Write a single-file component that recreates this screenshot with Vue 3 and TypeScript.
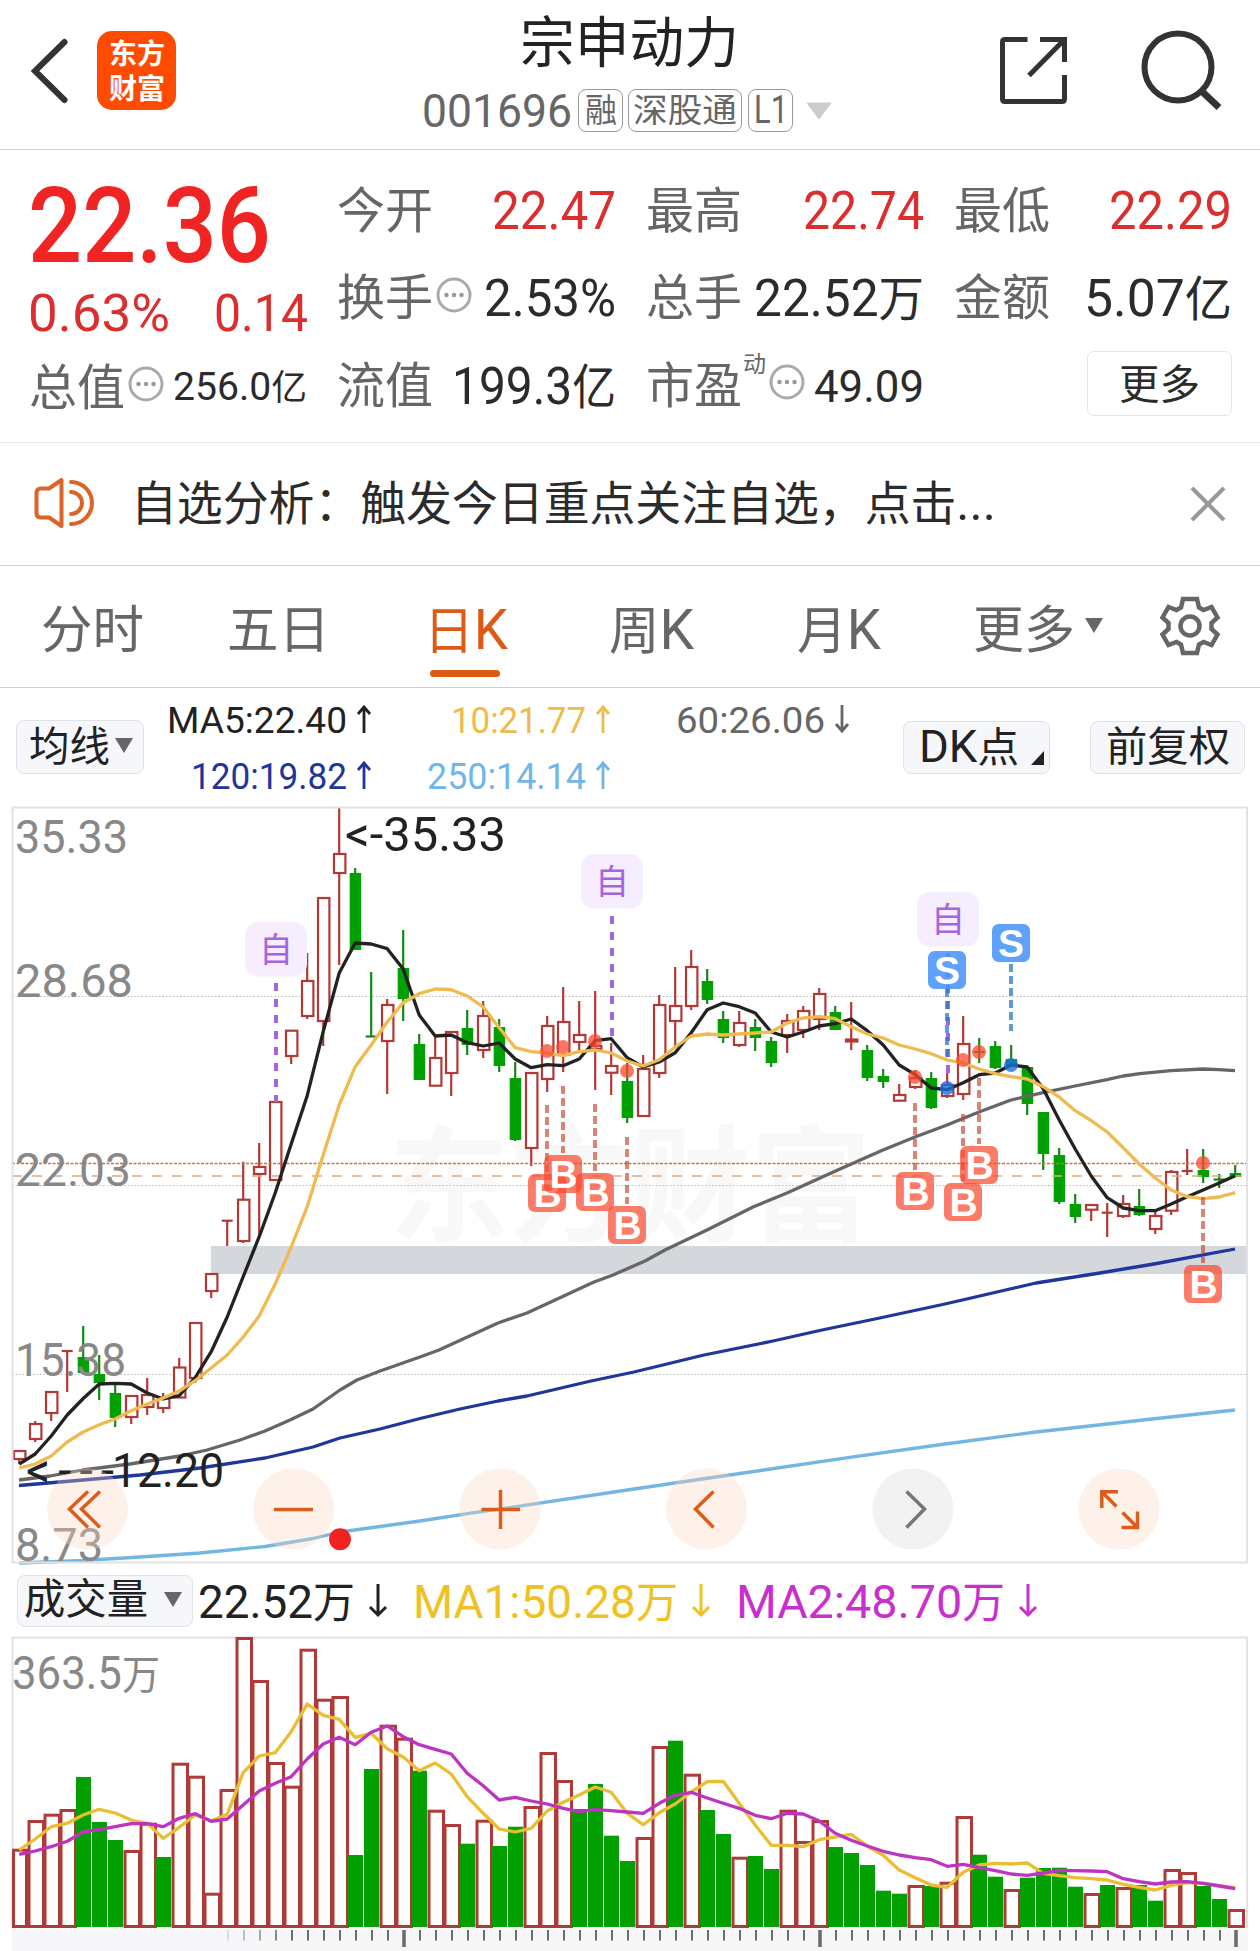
<script setup lang="ts">
import { h } from 'vue'

interface FitProps {
  t: string
  w: number
  s: number
}

// One line of text set to an exact advance width; the box bottom is the baseline.
// Han characters are set a little smaller than the Latin ones beside them.
const Fit = (p: FitProps) => {
  const runs = p.t.match(/[\u3000-\u9fff\uff00-\uffef]+|[^\u3000-\u9fff\uff00-\uffef]+/g) ?? []
  const height = p.s * 0.72
  const han = runs.length === 1 && p.t.charCodeAt(0) >= 0x3000
  return h('svg', { width: p.w, height, style: 'display:block;overflow:visible;flex:none' }, [
    h(
      'text',
      {
        x: 0, y: han ? height - p.s * 0.022 : height, 'font-size': p.s,
        textLength: p.w, lengthAdjust: 'spacingAndGlyphs', fill: 'currentColor',
      },
      runs.map((r) => h('tspan', { 'font-size': r.charCodeAt(0) >= 0x3000 ? p.s * 0.915 : p.s }, r)),
    ),
  ])
}
Fit.props = ['t', 'w', 's']

type Candle = [number, number, number, number, 'r' | 'g']
// high, body top, body bottom, low, direction
const candles: Candle[] = [
  [1451, 1451, 1459, 1464, 'r'], [1421, 1424, 1439, 1442, 'r'], [1391, 1392, 1413, 1421, 'r'], [1351, 1351, 1351, 1392, 'r'],
  [1326, 1357, 1373, 1373, 'g'], [1355, 1374, 1383, 1400, 'g'], [1385, 1393, 1418, 1427, 'g'], [1396, 1396, 1417, 1424, 'r'],
  [1378, 1395, 1407, 1415, 'r'], [1393, 1398, 1408, 1413, 'r'], [1358, 1367.5, 1397.5, 1397.5, 'r'], [1323, 1323, 1378, 1383, 'r'],
  [1274, 1274, 1291, 1298, 'r'], [1220.7, 1220.7, 1220.7, 1246, 'r'], [1161.7, 1199.7, 1241, 1243, 'r'], [1143, 1167, 1174, 1235, 'r'],
  [1102, 1102, 1180, 1180, 'r'], [1030.7, 1030.7, 1056, 1064, 'r'], [953, 981, 1016, 1019, 'r'], [898, 898, 1021, 1046, 'r'],
  [807, 854, 873, 965, 'r'], [868, 873, 950, 950, 'g'], [972, 1036.5, 1036.5, 1037, 'g'], [999, 1005, 1041, 1094, 'r'],
  [930, 968, 999, 1021, 'g'], [1034, 1044, 1080, 1080, 'g'], [1037, 1058, 1085.7, 1085.7, 'r'], [1032, 1032, 1073, 1096, 'r'],
  [1010, 1028, 1045, 1055, 'g'], [1001, 1016, 1050, 1058, 'r'], [1019, 1027, 1066, 1072, 'g'], [1062, 1078, 1140, 1141, 'g'],
  [1073, 1073, 1148, 1166, 'r'], [1016, 1026, 1079, 1092, 'r'], [987, 1022, 1055, 1072, 'r'], [1001, 1035, 1042, 1050, 'r'],
  [991, 1046, 1049, 1090, 'r'], [1043, 1066, 1072.7, 1095, 'r'], [1063, 1081, 1118, 1123, 'g'], [1055, 1069, 1116, 1117, 'r'],
  [995, 1005, 1073, 1078, 'r'], [967, 1006, 1021, 1048, 'r'], [950, 967, 1006, 1010, 'r'], [969, 981, 1000, 1004, 'g'],
  [1011, 1019, 1038, 1043, 'g'], [1011, 1023, 1045, 1047, 'r'], [1019, 1027, 1038, 1051, 'g'], [1037, 1041, 1063, 1067, 'g'],
  [1014, 1021, 1035, 1053, 'r'], [1006, 1011, 1030, 1038, 'r'], [988, 994, 1019, 1030, 'r'], [1006, 1012, 1030, 1030, 'g'],
  [1002, 1039.5, 1041.5, 1050, 'r'], [1045, 1050, 1078, 1081, 'g'], [1069, 1076, 1082, 1088, 'g'], [1084, 1095, 1100.7, 1100.7, 'r'],
  [1070, 1078, 1087, 1089, 'r'], [1072, 1078, 1108, 1109, 'g'], [1073, 1085, 1096, 1098, 'r'], [1016, 1044, 1094, 1100, 'r'],
  [1038, 1052, 1052, 1063, 'g'], [1041, 1046, 1068, 1069, 'g'], [1045, 1059, 1067, 1067, 'g'], [1067, 1067, 1104, 1115, 'g'],
  [1112, 1112, 1154, 1170, 'g'], [1148, 1155, 1202, 1204, 'g'], [1194, 1204, 1217, 1223, 'g'], [1205, 1205, 1209.7, 1221, 'r'],
  [1203, 1212.7, 1212.7, 1237, 'r'], [1195, 1204, 1216, 1218, 'r'], [1189, 1206, 1215, 1216, 'g'], [1210, 1216, 1229, 1234, 'r'],
  [1170, 1172, 1210.7, 1215, 'r'], [1149, 1171, 1171, 1175, 'r'], [1149, 1170, 1177, 1183, 'g'], [1174, 1179.5, 1179.5, 1188, 'g'],
  [1165, 1173, 1177, 1177, 'g'],
]

const cx = (i: number) => 19.2 + i * 16
const line = (ys: number[], f: (y: number) => number = (y) => y) => ys.map((y, i) => `${cx(i)},${f(y).toFixed(1)}`).join(' ')

const ma5 = line([
  1464, 1454, 1436, 1415, 1398.5, 1384, 1383.3, 1384, 1393, 1399, 1395.7, 1377.7, 1351.7, 1317, 1276.7, 1236.7, 1193, 1144, 1095.7,
  1031.7, 973, 943, 944, 948.7, 969, 1015, 1036, 1035, 1042.7, 1046, 1043, 1059, 1067.7, 1064.7, 1065.7, 1059, 1040.7, 1038.7, 1057.7,
  1067, 1062, 1052.7, 1032.7, 1009.7, 1003, 1006.7, 1013, 1032, 1037, 1032, 1026, 1023.7, 1019, 1030.7, 1045, 1065, 1074.7, 1088,
  1089.7, 1082.7, 1074.7, 1073, 1065, 1067, 1088.7, 1120, 1149, 1176, 1197.7, 1208, 1210.7, 1210.7, 1204, 1196.7, 1190, 1183, 1175.7,
])
const ma10 = line([
  1468, 1464, 1456, 1442, 1432, 1424.7, 1419, 1410.7, 1404, 1398, 1391, 1380.7, 1368, 1355, 1337, 1316, 1284, 1247, 1206.7, 1155, 1105,
  1066.7, 1045, 1022, 1002.7, 993.7, 989, 989.7, 996, 1007, 1027.7, 1047.7, 1051.7, 1053, 1055.7, 1051.7, 1050, 1053, 1061, 1066,
  1059.7, 1047, 1036, 1034, 1035, 1034, 1033, 1032, 1023, 1018, 1016.7, 1018.7, 1026.7, 1034, 1038, 1045, 1049, 1053.7, 1060, 1063,
  1069, 1073.7, 1076.7, 1079, 1086.7, 1097, 1110.7, 1120.7, 1132, 1147.7, 1164, 1178, 1190, 1196.7, 1198.7, 1197, 1192.7,
])
const ma60 =
  '19,1480 50,1476 83,1470 130,1464 180,1456 207,1450 240,1440 265,1431 290,1420 313,1409 340,1390 357,1380 380,1371 420,1357 439,1350 498,1323 527,1313 594,1282 613,1275 645,1261 665,1250 707,1230 753,1207 787,1193 840,1169 883,1150 915,1137 947,1125 979,1112 1011,1100 1043,1092.7 1075,1086 1107,1079.7 1123,1076 1140,1073.7 1171,1070.7 1203,1069 1219,1069.7 1235,1070.7'
const ma120 =
  '19,1485.5 83,1480 140,1475 200,1468 265,1458 313,1447 340,1438 380,1429 420,1418.5 460,1409 498,1401 527,1396 591,1381 634,1372 704,1355 773,1341 822,1330 875,1319 945,1304 1036,1283 1100,1273 1154,1264 1235,1249'
const ma250 =
  '19,1563 83,1560.5 140,1557 200,1553 265,1546.5 313,1538.5 340,1532 380,1526.5 420,1521 474,1512.7 516,1506.7 634,1489 709,1478 848,1457.7 945,1444 1036,1432 1143,1420 1235,1410'

const volTops = [
  1848.7, 1820, 1813.7, 1809, 1777, 1822, 1840, 1850, 1822.7, 1857, 1762.7, 1775.7, 1892.7, 1789, 1637, 1680, 1762, 1785.7, 1648.7,
  1698.7, 1696, 1855, 1769, 1724.7, 1737.7, 1770.7, 1809.7, 1824, 1843.7, 1819.7, 1846, 1826.7, 1806, 1752, 1780, 1809, 1784, 1835.7,
  1861, 1837, 1746, 1740.7, 1773.7, 1810, 1834, 1856.7, 1856, 1869, 1809.7, 1841, 1820, 1847, 1853, 1865, 1890.7, 1893.7, 1885, 1886,
  1881.7, 1816, 1854.7, 1876.7, 1889, 1877.7, 1868, 1867.7, 1886.7, 1893, 1885, 1887, 1885, 1900.7, 1869, 1872, 1886, 1899, 1909,
]
const volGreen = new Set([
  4, 5, 6, 9, 21, 22, 25, 28, 30, 31, 35, 36, 37, 38, 41, 43, 44, 46, 47, 51, 52, 53, 54, 55, 57, 60, 61, 63, 64, 65, 66, 68, 70, 71,
  74, 75,
])
const toVol = (y: number) => 1620 + y / 3
const vma1 = line(
  [
    690, 657, 620, 610, 585, 568, 579, 600, 610, 655, 622, 585, 603, 583, 458, 408, 398, 335, 252, 286, 298, 352, 340, 386, 411, 452,
    429, 462, 530, 580, 627, 636, 625, 573, 547, 525, 501, 517, 580, 614, 578, 552, 516, 485, 484, 550, 615, 676, 676, 680, 659, 651,
    643, 678, 706, 750, 773, 795, 802, 757, 735, 730, 732, 729, 760, 767, 773, 776, 780, 793, 802, 810, 796, 788, 790, 797, 803,
  ],
  toVol,
)
const vma2 = line(
  [
    703, 693, 680, 664, 636, 629, 620, 611, 611, 620, 595, 581, 604, 597, 555, 513, 490, 470, 417, 372, 352, 374, 337, 318, 350, 374,
    388, 402, 460, 497, 540, 532, 543, 552, 565, 575, 569, 572, 576, 580, 550, 526, 517, 534, 550, 565, 586, 596, 580, 582, 603, 640,
    661, 678, 694, 705, 713, 719, 739, 733, 743, 752, 762, 766, 759, 751, 752, 753, 755, 776, 785, 792, 786, 785, 790, 798, 806,
  ],
  toVol,
)

const ticks = Array.from({ length: 64 }, (_, k) => ({
  x: 228 + k * 16,
  major: k === 11 || k === 37 || k === 63,
  o: Math.min(1, 0.2 + k * 0.2),
}))

const axis: [string, number, number][] = [
  ['35.33', 852.5, 113], ['28.68', 997, 118], ['22.03', 1186, 116], ['15.38', 1375.5, 111], ['8.73', 1561, 88],
]
// x, line start, badge top, marker dot y
const buys = [
  [547, 1105, 1174, 1051], [563, 1086, 1155, 1047], [595, 1104, 1173, 1041], [627, 1137, 1206, 1071],
  [915, 1103, 1172, 1077], [963, 1114, 1183, 1060], [979, 1078, 1146, 1052], [1203, 1197, 1265, 1163],
]
const sells = [[947, 989, 1059, 951, 1088], [1011, 964, 1031, 924, 1065]]
const picks = [[276, 922, 983, 1102], [612, 854, 916, 1036], [948, 892, 953, 1073]]
</script>

<template>
  <main class="app">
    <header class="top">
      <svg class="back" width="40" height="68" viewBox="30 37 40 68">
        <path d="M65.5 42 36 71 65.5 100" fill="none" stroke="#333" stroke-width="6" stroke-linecap="round" transform="translate(-1 0)" />
      </svg>
      <div class="logo"><Fit t="东方" :w="56" :s="31" /><Fit t="财富" :w="56" :s="31" /></div>
      <div class="heading">
        <Fit class="name" t="宗申动力" :w="219" :s="60" />
        <div class="codes">
          <Fit t="001696" :w="150" :s="46" />
          <span class="tag"><Fit t="融" :w="32" :s="36" /></span>
          <span class="tag wide"><Fit t="深股通" :w="104" :s="36" /></span>
          <span class="tag"><Fit t="L1" :w="34" :s="38" /></span>
          <svg class="caret" width="26" height="18" viewBox="0 0 26 18"><path d="M1 1h24L13 17z" fill="#ccc" stroke="#ccc" stroke-linejoin="round" /></svg>
        </div>
      </div>
      <svg class="share" width="68" height="68" viewBox="999 37 68 68" fill="none" stroke="#333" stroke-width="5">
        <path d="M1026.5 39.5H1004q-2.500 0-2.500 2.500V99q0 2.500 2.500 2.500h57q2.500 0 2.500-2.500V75M1039 39.500h24.500V62M1063 40l-35 35.500" />
      </svg>
      <svg class="search" width="82" height="82" viewBox="1140 30 82 82" fill="none" stroke="#333" stroke-width="6">
        <circle cx="1177" cy="67" r="33.500" /><path d="M1201 91.500 1218 107.500" stroke-width="7" />
      </svg>
    </header>

    <section class="quote">
      <div class="left">
        <Fit class="price" t="22.36" :w="243" :s="105" />
        <div class="line change"><Fit t="0.63%" :w="142" :s="52" /><Fit t="0.14" :w="94" :s="52" /></div>
        <div class="line total">
          <div class="lab"><Fit t="总值" :w="96" :s="53" />
            <svg class="dots" width="36" height="36" viewBox="0 0 36 36"><circle cx="18" cy="18" r="16" fill="none" stroke="#aaa" stroke-width="3" /><path d="M10.500 18h.01M18 18h.01M25.500 18h.01" stroke="#999" stroke-width="4.500" stroke-linecap="round" /></svg>
          </div>
          <Fit class="up5" t="256.0亿" :w="134" :s="38" />
        </div>
      </div>
      <div class="grid">
        <div class="cell"><Fit class="g" t="今开" :w="96" :s="53" /><Fit class="red" t="22.47" :w="124" :s="53" /></div>
        <div class="cell"><Fit class="g" t="最高" :w="96" :s="53" /><Fit class="red" t="22.74" :w="121" :s="53" /></div>
        <div class="cell"><Fit class="g" t="最低" :w="96" :s="53" /><Fit class="red" t="22.29" :w="123" :s="53" /></div>
        <div class="cell">
          <div class="lab"><Fit class="g" t="换手" :w="96" :s="53" />
            <svg class="dots" width="36" height="36" viewBox="0 0 36 36"><circle cx="18" cy="18" r="16" fill="none" stroke="#aaa" stroke-width="3" /><path d="M10.500 18h.01M18 18h.01M25.500 18h.01" stroke="#999" stroke-width="4.500" stroke-linecap="round" /></svg>
          </div>
          <Fit t="2.53%" :w="132" :s="52" />
        </div>
        <div class="cell"><Fit class="g" t="总手" :w="96" :s="53" /><Fit t="22.52万" :w="170" :s="52" /></div>
        <div class="cell"><Fit class="g" t="金额" :w="96" :s="53" /><Fit t="5.07亿" :w="148" :s="52" /></div>
        <div class="cell"><Fit class="g" t="流值" :w="96" :s="53" /><Fit t="199.3亿" :w="164" :s="52" /></div>
        <div class="cell">
          <div class="lab"><Fit class="g" t="市盈" :w="96" :s="53" /><span class="sup">动</span>
            <svg class="dots" width="36" height="36" viewBox="0 0 36 36"><circle cx="18" cy="18" r="16" fill="none" stroke="#aaa" stroke-width="3" /><path d="M10.500 18h.01M18 18h.01M25.500 18h.01" stroke="#999" stroke-width="4.500" stroke-linecap="round" /></svg>
          </div>
          <Fit class="up3" t="49.09" :w="110" :s="44" />
        </div>
        <div class="cell end"><button class="more"><Fit t="更多" :w="81" :s="45" /></button></div>
      </div>
    </section>

    <section class="notice">
      <svg width="62" height="54" viewBox="33 476 62 54" fill="none" stroke="#dc6428" stroke-width="4" stroke-linecap="round" stroke-linejoin="round">
        <path d="M61.500 480v46L49 517.500H41q-4.500 0-4.500-4.500V493q0-4.500 4.500-4.500h8z" />
        <path d="M71 492a11 11 0 0 1 0 22M71 482a21 21 0 0 1 0 42" />
      </svg>
      <Fit class="msg" t="自选分析：触发今日重点关注自选，点击..." :w="865" :s="50.500" />
      <svg class="close" width="36" height="36" viewBox="0 0 36 36"><path d="M2 2 34 34M34 2 2 34" stroke="#999" stroke-width="4.200" /></svg>
    </section>

    <nav class="tabs">
      <Fit class="t1" t="分时" :w="103" :s="56" />
      <Fit class="t2" t="五日" :w="103" :s="56" />
      <span class="t3 on"><Fit t="日K" :w="84" :s="56" /></span>
      <Fit class="t4" t="周K" :w="85" :s="56" />
      <Fit class="t5" t="月K" :w="84" :s="56" />
      <Fit class="t6" t="更多" :w="102" :s="56" />
      <svg class="tri" width="18" height="15" viewBox="0 0 18 15"><path d="M0 0h18L9 15z" fill="#666" /></svg>
      <svg class="gear" width="62" height="62" viewBox="-31 -31 62 62" fill="none" stroke="#666" stroke-width="4.500" stroke-linejoin="miter">
        <path d="M-7-27H7L9-18.500 13.500-16 21.500-19 27.500-8.500 21.500-3V3L27.500 8.500 21.500 19 13.500 16 9 18.500 7 27H-7L-9 18.500-13.500 16-21.500 19-27.500 8.500-21.500 3V-3L-27.500-8.500-21.500-19-13.500-16-9-18.500z" />
        <circle r="9.500" />
      </svg>
    </nav>

    <section class="mabar">
      <div class="chip c1"><Fit t="均线" :w="81" :s="45" /><svg width="18" height="15" viewBox="0 0 18 15"><path d="M0 0h18L9 15z" fill="#666" /></svg></div>
      <div class="legend">
        <span style="color: #222"><Fit t="MA5:22.40" :w="180" :s="37.500" /><svg width="16" height="28" viewBox="0 0 16 28"><path d="M8 28V2M2 9 8 2l6 7" /></svg></span>
        <span style="color: #efba4f"><Fit t="10:21.77" :w="135" :s="37.500" /><svg width="16" height="28" viewBox="0 0 16 28"><path d="M8 28V2M2 9 8 2l6 7" /></svg></span>
        <span style="color: #666"><Fit t="60:26.06" :w="149" :s="37.500" /><svg width="16" height="28" viewBox="0 0 16 28"><path d="M8 0v26M2 19l6 7 6-7" /></svg></span>
        <span style="color: #21369a"><Fit t="120:19.82" :w="156" :s="37.500" /><svg width="16" height="28" viewBox="0 0 16 28"><path d="M8 28V2M2 9 8 2l6 7" /></svg></span>
        <span style="color: #70b7e8"><Fit t="250:14.14" :w="159" :s="37.500" /><svg width="16" height="28" viewBox="0 0 16 28"><path d="M8 28V2M2 9 8 2l6 7" /></svg></span>
      </div>
      <div class="chip c2"><Fit t="DK点" :w="100" :s="45" /><svg class="corner" width="13" height="14" viewBox="0 0 13 14"><path d="M13 0v14H0z" fill="#222" /></svg></div>
      <div class="chip c3"><Fit t="前复权" :w="124" :s="45" /></div>
    </section>

    <svg class="chart" width="1260" height="757" viewBox="0 807 1260 757">
      <text class="mark" x="389" y="1232" font-size="126" textLength="482" lengthAdjust="spacingAndGlyphs">东方财富</text>
      <g stroke="#bbb" stroke-dasharray="1.500 2"><path d="M12 996.500H1247M12 1185.500H1247M12 1374.500H1247" /></g>
      <rect x="211" y="1246" width="1036" height="28" fill="#d4d7dc" />
      <g stroke-width="2.200">
        <template v-for="(c, i) in candles" :key="i">
          <path :d="`M${cx(i)} ${c[0]}V${c[1]}M${cx(i)} ${c[2]}V${c[3]}`" :stroke="c[4] === 'r' ? '#b13a38' : '#128a14'" />
          <path v-if="c[2] - c[1] < 1" :d="`M${cx(i) - 5.500} ${c[1]}h11`" :stroke="c[4] === 'r' ? '#b13a38' : '#128a14'" />
          <rect v-else-if="c[4] === 'r'" :x="cx(i) - 5.200" :y="c[1]" width="11.400" :height="c[2] - c[1]" fill="#fff" stroke="#b13a38" />
          <rect v-else :x="cx(i) - 5.500" :y="c[1]" width="11.500" :height="c[2] - c[1]" fill="#02a002" />
        </template>
      </g>
      <path d="M12 1163.500H1247" stroke="#c7733f" stroke-width="1.400" stroke-dasharray="3 1.500" />
      <path d="M12 1176H1247" stroke="#dda980" stroke-width="1.500" stroke-dasharray="10 10" />
      <g fill="none" stroke-width="3.300" stroke-linejoin="round">
        <polyline :points="ma250" stroke="#74b6e2" />
        <polyline :points="ma120" stroke="#21369a" />
        <polyline :points="ma60" stroke="#666" />
        <polyline :points="ma5" stroke="#222" />
        <polyline :points="ma10" stroke="#efba4f" />
      </g>
      <path d="M12.500 807.500H1247V1562.500H12.500z" fill="none" stroke="#e2e2e2" stroke-width="2" />

      <g v-for="p in picks" :key="p[0]">
        <rect :x="p[0] - 31" :y="p[1]" width="62" height="54.500" rx="13" fill="#f6edfe" />
        <text :x="p[0]" :y="p[1] + 40" text-anchor="middle" font-size="34" fill="#a566dc">自</text>
        <path :d="`M${p[0]} ${p[2]}V${p[3]}`" stroke="#a566dc" stroke-width="4" stroke-dasharray="8 8" />
      </g>
      <g v-for="b in buys" :key="'b' + b[0]">
        <circle :cx="b[0]" :cy="b[3]" r="7" fill="#f9492f" fill-opacity=".75" />
        <path :d="`M${b[0]} ${b[1]}V${b[2] - 2}`" stroke="#c94a38" stroke-opacity=".68" stroke-width="4" stroke-dasharray="8 4" />
        <rect :x="b[0] - 19" :y="b[2]" width="38" height="38" rx="6.500" fill="#f9492f" fill-opacity=".72" />
        <text class="letter" :x="b[0] + 0.500" :y="b[2] + 33" font-size="39">B</text>
      </g>
      <g v-for="s in sells" :key="'s' + s[0]">
        <circle :cx="s[0]" :cy="s[4]" r="7" fill="#1a6fe0" fill-opacity=".8" />
        <path :d="`M${s[0]} ${s[1]}V${s[2]}`" stroke="#2f78c8" stroke-opacity=".75" stroke-width="4" stroke-dasharray="8 4" />
        <rect :x="s[0] - 19" :y="s[3]" width="38" height="38" rx="6.500" fill="#4a94fa" fill-opacity=".88" />
        <text class="letter" :x="s[0]" :y="s[3] + 33" font-size="39">S</text>
      </g>

      <g fill="#888" font-size="47">
        <text v-for="a in axis" :key="a[0]" x="15" :y="a[1]" :textLength="a[2]" lengthAdjust="spacingAndGlyphs">{{ a[0] }}</text>
      </g>
      <g fill="#222" font-size="48">
        <text x="345" y="851" textLength="161" lengthAdjust="spacingAndGlyphs">&lt;-35.33</text>
        <text x="26" y="1487" textLength="88" lengthAdjust="spacing">&lt;---</text>
        <text x="112" y="1487" textLength="112" lengthAdjust="spacingAndGlyphs">12.20</text>
      </g>

      <g fill="#fbd3bf" fill-opacity=".33">
        <circle v-for="x in [87.500, 293.500, 500, 706.500, 1119]" :key="x" :cx="x" cy="1509" r="40.500" />
        <circle cx="913" cy="1509" r="40.500" fill="#d8d8d8" />
      </g>
      <g fill="none" stroke="#d95d1c" stroke-width="3.500">
        <path d="M88 1491.500 69.500 1509 88 1527.500M100 1491.500 81.500 1509 100 1527.500M274 1509.500h39M481.500 1509.500H520M500.500 1490v39M713.500 1491.500 695.500 1509l18 18.500" />
        <path d="M906.500 1491.500 924.500 1509l-18 18.500" stroke="#777" />
        <path d="M1118 1491.800H1101.800V1508M1102 1492l14.500 14.500M1121.500 1527.500H1137.500V1511.500M1137 1527l-14.500-14.500" />
      </g>
      <circle cx="340" cy="1539.300" r="11" fill="#f12222" />
    </svg>

    <section class="volhead">
      <div class="chip c4"><Fit t="成交量" :w="124" :s="46" /><svg width="18" height="15" viewBox="0 0 18 15"><path d="M0 0h18L9 15z" fill="#666" /></svg></div>
      <Fit class="v1" t="22.52万" :w="157" :s="47" />
      <svg class="a1" width="20" height="34" viewBox="0 0 20 34"><path d="M10 0v31M2 23l8 8 8-8" stroke="#222" /></svg>
      <Fit class="v2" t="MA1:50.28万" :w="265" :s="47" />
      <svg class="a2" width="20" height="34" viewBox="0 0 20 34"><path d="M10 0v31M2 23l8 8 8-8" stroke="#efc223" /></svg>
      <Fit class="v3" t="MA2:48.70万" :w="269" :s="47" />
      <svg class="a3" width="20" height="34" viewBox="0 0 20 34"><path d="M10 0v31M2 23l8 8 8-8" stroke="#c92fcf" /></svg>
    </section>

    <svg class="chart" width="1260" height="314" viewBox="0 1637 1260 314">
      <rect x="12" y="1928.500" width="1236" height="23" fill="#f7f7fa" />
      <path d="M12.500 1928V1637.500H1247V1928" fill="none" stroke="#e2e2e2" stroke-width="2" />
      <g fill="#888">
        <text x="12" y="1689" textLength="148" lengthAdjust="spacingAndGlyphs"><tspan font-size="46">363.5</tspan><tspan font-size="40">万</tspan></text>
      </g>
      <template v-for="(y, i) in volTops" :key="i">
        <rect v-if="volGreen.has(i)" :x="cx(i) - 7.200" :y="y" width="15" :height="1927 - y" fill="#02a002" />
        <rect v-else :x="Math.max(cx(i) - 6.200, 13.500)" :y="y + 1.500" :width="i ? 14.500 : 13" :height="1925 - y" fill="#fff" stroke="#b13a38" stroke-width="3" />
      </template>
      <g fill="none" stroke-width="3.300" stroke-linejoin="round">
        <polyline :points="vma1" stroke="#e9be33" />
        <polyline :points="vma2" stroke="#bf33c1" />
      </g>
      <path
        v-for="t in ticks" :key="t.x" :d="`M${t.x} 1930v${t.major ? 17 : 10.500}`" stroke="#6c6c6c"
        :stroke-width="t.major ? 3.600 : 2" :stroke-opacity="t.o"
      />
    </svg>
  </main>
</template>

<style>
body { margin: 0; background: #fff; }
</style>

<style scoped>
.app {
  width: 1260px;
  height: 1951px;
  overflow: hidden;
  background: #fff;
  color: #2b2b2b;
  font-family: Roboto, 'Noto Sans CJK SC', sans-serif;
}
.top { display: flex; align-items: flex-start; height: 149px; border-bottom: 1px solid #d2d2d2; box-sizing: content-box; }
.back { margin: 37px 0 0 30px; flex: none; }
.logo {
  display: flex; flex-direction: column; align-items: center; justify-content: center; gap: 12px;
  width: 79px; height: 79px; margin: 31px 0 0 27px; border-radius: 15px; background: #ff4b00; flex: none;
  color: #fff; font-weight: 700;
}
.heading { width: 412px; margin-left: 246px; flex: none; }
.name { margin: 19.500px 0 0 98px; color: #222; }
.codes { display: flex; align-items: center; margin-top: 26.500px; height: 43px; color: #666; }
.tag {
  display: flex; justify-content: center; align-items: flex-end; box-sizing: border-box;
  width: 45px; height: 43px; margin-left: 6px; padding-bottom: 8px; border: 1.500px solid #999; border-radius: 8px;
}
.tag.wide { width: 114px; margin-left: 5px; }
.caret { margin-left: 13px; }
.share { margin: 37px 0 0 166px; flex: none; }
.search { margin: 30px 0 0 73px; flex: none; }

.quote { display: flex; height: 292px; border-bottom: 1px solid #e8e8e8; }
.left { width: 278px; margin-left: 28px; }
.price { margin-top: 36.400px; font-weight: 500; color: #f12424; }
.line { display: flex; justify-content: space-between; align-items: flex-end; }
.change { margin-top: 31.600px; color: #d92f2f; width: 280px; }
.total { margin: 35px 0 0 1px; width: 278px; }
.total .lab { color: #666; }
.lab { display: flex; align-items: flex-end; position: relative; }
.dots { margin: 0 0 4px 3px; }
.up5 { margin-bottom: 5.500px; }
.up3 { margin-bottom: 3px; }
.grid { display: grid; grid-template-columns: 279px 278px 278px; column-gap: 30px; grid-auto-rows: 87.600px; margin: -8.600px 0 0 31px; }
.cell { display: flex; justify-content: space-between; align-items: flex-end; }
.end { justify-content: flex-end; }
.g { color: #666; }
.red { color: #d92f2f; }
.sup { position: absolute; left: 97px; bottom: 25px; font-size: 23px; line-height: 28px; color: #666; }
.sup + .dots { margin-left: 27px; }
.more {
  display: flex; align-items: flex-end; justify-content: center; box-sizing: border-box; width: 145px; height: 65px;
  padding: 0 0 15px; margin-bottom: -12px; border: 1.500px solid #e2e5e8; border-radius: 7px; background: #fff; color: #2b2b2b; font: inherit;
}

.notice { display: flex; height: 122px; align-items: flex-start; border-bottom: 1px solid #d2d2d2; }
.notice > svg:first-child { margin: 33px 0 0 33px; }
.msg { margin: 40.600px 0 0 36px; }
.notice .close { margin: 42.500px 0 0 194px; }

.tabs { display: flex; align-items: flex-end; box-sizing: content-box; height: 83px; padding-bottom: 38px; border-bottom: 1px solid #d2d2d2; color: #666; }
.t1 { margin-left: 41px; }
.t2 { margin-left: 83px; }
.t3 { margin-left: 94px; }
.t4 { margin-left: 101px; }
.t5 { margin-left: 103px; }
.t6 { margin-left: 92px; }
.on { position: relative; color: #dc5a14; }
.on::after { content: ''; position: absolute; left: 6px; bottom: -28px; width: 70px; height: 7.500px; border-radius: 4px; background: #dc5a14; }
.tri { margin: 0 0 16px 10px; }
.gear { margin: 0 0 -8px 56px; }

.mabar { display: flex; height: 119px; }
.chip {
  display: flex; align-items: flex-end; box-sizing: border-box; height: 54px; padding-bottom: 10.500px;
  border: 1.500px solid #e0e2e6; border-radius: 8px; background: #f6f7fa; color: #222; flex: none;
}
.c1 { width: 128px; margin: 31.500px 0 0 16px; padding-left: 11.500px; }
.c1 svg:last-child { margin: 0 0 9px 5px; }
.legend { display: grid; grid-template-columns: 205px 239px 238.500px; grid-auto-rows: 56px; width: 684px; margin-top: -11px; margin-left: 23px; }
.legend span { display: flex; align-items: flex-end; justify-content: flex-end; }
.legend svg:last-child { margin-left: 9px; overflow: visible; fill: none; stroke: currentColor; stroke-width: 2.800; }
.c2 { width: 147px; margin: 32.500px 0 0 52px; padding-left: 15px; height: 53px; }
.corner { margin: 0 0 -3px 12px; }
.c3 { width: 155px; margin: 32.500px 0 0 39.500px; padding-left: 15px; height: 53px; }

.chart { display: block; flex: none; overflow: visible; }
.mark { font-family: 'Noto Sans CJK SC', sans-serif; font-weight: 700; fill: #f8f8f8; }
.letter { font-family: 'Liberation Sans', sans-serif; font-weight: 700; text-anchor: middle; fill: #fff; }

.volhead { display: flex; align-items: flex-end; height: 73px; box-sizing: border-box; padding-bottom: 19.500px; }
.c4 { width: 175.500px; height: 52px; margin: 0 0 -9px 17px; padding: 0 0 10px 5.500px; }
.c4 svg:last-child { margin: 0 0 9px 16.500px; }
.v1 { margin-left: 5px; color: #222; }
.v2 { margin-left: 25px; color: #efc223; }
.v3 { margin-left: 25px; color: #c92fcf; }
.a1, .a2, .a3 { fill: none; stroke-width: 3; margin-left: 13px; }
</style>
